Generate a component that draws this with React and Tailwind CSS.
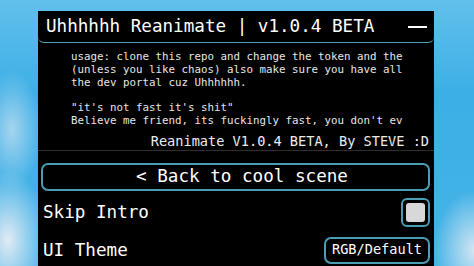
import React, { useState } from 'react';

const mono = "font-['DejaVu_Sans_Mono','Liberation_Mono',monospace]";

const App = () => {
  const [skipIntro, setSkipIntro] = useState(false);

  return (
    <div
      className={`w-[474px] h-[266px] overflow-hidden ${mono} bg-[radial-gradient(ellipse_40px_70px_at_8px_240px,rgba(232,238,244,0.95),rgba(232,238,244,0)),radial-gradient(ellipse_30px_60px_at_12px_130px,rgba(210,228,242,0.7),rgba(210,228,242,0)),radial-gradient(ellipse_40px_60px_at_474px_250px,rgba(225,235,244,0.9),rgba(225,235,244,0)),linear-gradient(180deg,#62c0ec_0%,#3cafe6_35%,#45b3e7_100%)]`}
    >
      <div className="ml-[38px] mt-[11px] w-[396px] h-[300px] bg-black">
        {/* title bar */}
        <div className="h-[32px] flex items-center justify-between pl-[8px] pr-[7px] rounded-[6px] border-b-[1.5px] border-[#4a9db3] bg-black">
          <span className="text-[17.6px] text-white leading-none">Uhhhhhh Reanimate | v1.0.4 BETA</span>
          <span className="w-[19px] h-[2px] bg-white mt-[1px]"></span>
        </div>

        {/* info text */}
        <div className="pt-[8px] pl-[33px]">
          <div className="w-[333px] text-[10.8px] leading-[12.8px] text-[#e6e6e6]">
            <p>usage: clone this repo and change the token and the (unless you like chaos) also make sure you have all the dev portal cuz Uhhhhhh.</p>
            <p className="mt-[12.8px] whitespace-nowrap">"it's not fast it's shit"</p>
            <p className="whitespace-nowrap">Believe me friend, its fuckingly fast, you don't ev</p>
          </div>
        </div>
        <div className="mt-[5px] h-[16px] flex items-center justify-end pr-[5px] text-[13.6px] text-[#ececec] border-b border-[#2e2e2e] box-content pb-[1px]">
          Reanimate V1.0.4 BETA, By STEVE :D
        </div>

        {/* back button */}
        <button className="mt-[12px] ml-[3px] w-[389px] h-[28px] flex items-center justify-center pl-[13px] rounded-[7px] border-2 border-[#4a9db3] text-[17.6px] text-white leading-none">
          &lt; Back to cool scene
        </button>

        {/* options */}
        <div className="mt-[7px] h-[29px] flex items-center justify-between pl-[5px] pr-[4px]">
          <span className="text-[17.6px] text-white">Skip Intro</span>
          <button
            onClick={() => setSkipIntro(!skipIntro)}
            className="w-[29px] h-[29px] rounded-[6px] border-2 border-[#4a9db3] p-[3px]"
          >
            <div className={`w-full h-full rounded-[3px] ${skipIntro ? 'bg-[#4a9db3]' : 'bg-[#d8d8d8]'}`}></div>
          </button>
        </div>
        <div className="mt-[10px] h-[27px] flex items-center justify-between pl-[5px] pr-[4px]">
          <span className="text-[17.6px] text-white">UI Theme</span>
          <button className="w-[106px] h-[27px] flex items-center justify-center rounded-[7px] border-2 border-[#4a9db3] text-[13.6px] text-white leading-none">
            RGB/Default
          </button>
        </div>
      </div>
    </div>
  );
};

export default App;
